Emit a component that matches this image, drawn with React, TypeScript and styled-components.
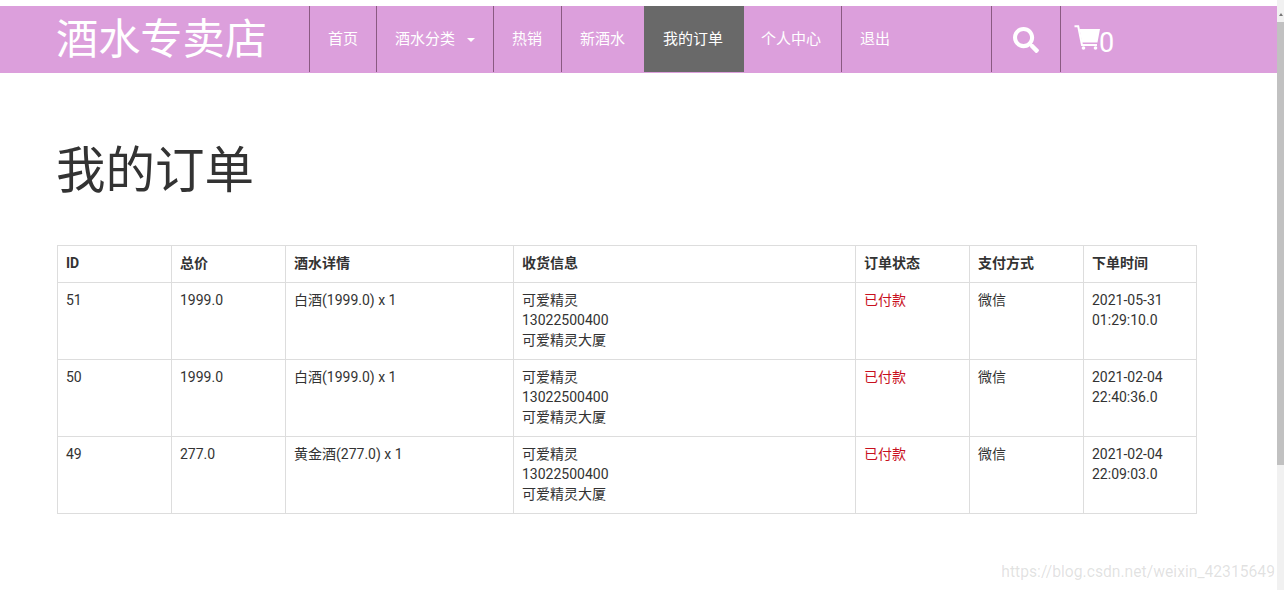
import React from "react";
import styled, { createGlobalStyle } from "styled-components";
import { FaSearch } from "react-icons/fa";

const GlobalStyle = createGlobalStyle`
  html, body {
    margin: 0;
    padding: 0;
    height: 100%;
    overflow: hidden;
    background: #fff;
    font-family: Roboto, "Noto Sans CJK SC", sans-serif;
    color: #333;
  }
`;

const Page = styled.div`
  display: flex;
  width: 1284px;
  height: 590px;
  position: relative;
  overflow: hidden;
`;

const Content = styled.div`
  width: 1277px;
  padding-top: 6px;
`;

const Navbar = styled.nav`
  display: flex;
  height: 67px;
  background: #dc9fdc;
  color: #fff;
`;

const Brand = styled.div`
  width: 253px;
  padding-left: 56px;
  font-size: 42.2px;
  line-height: 60px;
  font-family: "Noto Sans CJK SC", sans-serif;
  font-weight: 400;
`;

const NavItem = styled.a<{ $width: number; $active?: boolean; $plain?: boolean }>`
  box-sizing: border-box;
  width: ${(p) => p.$width}px;
  height: 66px;
  display: flex;
  align-items: center;
  gap: 12px;
  padding: 0 0 4px ${(p) => (p.$active ? 19 : p.$plain ? 17 : 18)}px;
  font-size: 15px;
  color: #fff;
  background: ${(p) => (p.$active ? "#696969" : "transparent")};
  border-left: ${(p) => (p.$plain ? "none" : "1px solid #8a5a82")};
`;

const Caret = styled.span`
  width: 0;
  height: 0;
  margin-top: 5px;
  border-left: 4px solid transparent;
  border-right: 4px solid transparent;
  border-top: 4px solid #fff;
`;

const IconItem = styled.div<{ $width: number }>`
  box-sizing: border-box;
  width: ${(p) => p.$width}px;
  height: 66px;
  display: flex;
  align-items: center;
  padding: 2px 0 0 21px;
  border-left: 1px solid #8a5a82;
`;

const CartItem = styled(IconItem)`
  padding: 0 0 0 13px;
  font-size: 27px;
  line-height: 1;
`;

const CartIcon = styled.svg`
  width: 26px;
  height: 25px;
  margin-bottom: 3px;
`;

const CartCount = styled.span`
  margin: 8px 0 0 -1px;
`;

const Main = styled.main`
  padding: 67px 80px 0 57px;
`;

const Heading = styled.h1`
  margin: 0 0 43px -1px;
  font-size: 49.5px;
  line-height: 62px;
  font-weight: 400;
`;

const Table = styled.table`
  width: 1139px;
  table-layout: fixed;
  border-collapse: collapse;
  font-size: 14px;
  line-height: 20px;
`;

const Head = styled.th`
  padding: 7px 8px 9px;
  height: 20px;
  border: 1px solid #ddd;
  text-align: left;
  font-weight: 700;
`;

const Cell = styled.td<{ $paid?: boolean }>`
  padding: 7px 8px 9px;
  height: 60px;
  border: 1px solid #ddd;
  vertical-align: top;
  color: ${(p) => (p.$paid ? "#c8101e" : "#333")};
`;

const Line = styled.div``;

const Scrollbar = styled.div`
  width: 7px;
  background: #f1f1f1;
  display: flex;
  flex-direction: column;
  align-items: center;
`;

const ArrowUp = styled.span`
  width: 0;
  height: 0;
  margin-top: 13px;
  border-left: 2px solid transparent;
  border-right: 2px solid transparent;
  border-bottom: 3px solid #777;
`;

const Thumb = styled.div`
  width: 100%;
  height: 443px;
  margin-top: 6px;
  background: #c1c1c1;
`;

const Watermark = styled.div`
  position: absolute;
  right: 9px;
  bottom: 9px;
  font-size: 15.7px;
  color: rgba(120, 120, 120, 0.22);
`;

const columns = [114, 114, 228, 342, 114, 114, 113];
const titles = ["ID", "总价", "酒水详情", "收货信息", "订单状态", "支付方式", "下单时间"];

const orders = [
  { id: 51, total: "1999.0", item: "白酒(1999.0) x 1", date: "2021-05-31", time: "01:29:10.0" },
  { id: 50, total: "1999.0", item: "白酒(1999.0) x 1", date: "2021-02-04", time: "22:40:36.0" },
  { id: 49, total: "277.0", item: "黄金酒(277.0) x 1", date: "2021-02-04", time: "22:09:03.0" },
];

export default function App() {
  return (
    <Page>
      <GlobalStyle />
      <Content>
        <Navbar>
          <Brand>酒水专卖店</Brand>
          <NavItem $width={67}>首页</NavItem>
          <NavItem $width={117}>
            酒水分类
            <Caret />
          </NavItem>
          <NavItem $width={68}>热销</NavItem>
          <NavItem $width={83}>新酒水</NavItem>
          <NavItem $width={100} $active $plain>我的订单</NavItem>
          <NavItem $width={97} $plain>个人中心</NavItem>
          <NavItem $width={150}>退出</NavItem>
          <IconItem $width={69}>
            <FaSearch size={26} />
          </IconItem>
          <CartItem $width={120}>
            <CartIcon viewBox="0 0 26 25">
              <path d="M0.5 1.2H4.2L8 20H23" fill="none" stroke="#fff" strokeWidth="2" />
              <path d="M5.5 4H26L23.5 17.5H8Z" fill="#fff" />
              <circle cx="9.5" cy="23" r="1.8" fill="#fff" />
              <circle cx="21.5" cy="23" r="1.8" fill="#fff" />
            </CartIcon>
            <CartCount>0</CartCount>
          </CartItem>
        </Navbar>
        <Main>
          <Heading>我的订单</Heading>
          <Table>
            <colgroup>
              {columns.map((w, i) => (
                <col key={i} width={w} />
              ))}
            </colgroup>
            <thead>
              <tr>
                {titles.map((t) => (
                  <Head key={t}>{t}</Head>
                ))}
              </tr>
            </thead>
            <tbody>
              {orders.map((o) => (
                <tr key={o.id}>
                  <Cell>{o.id}</Cell>
                  <Cell>{o.total}</Cell>
                  <Cell>{o.item}</Cell>
                  <Cell>
                    <Line>可爱精灵</Line>
                    <Line>13022500400</Line>
                    <Line>可爱精灵大厦</Line>
                  </Cell>
                  <Cell $paid>已付款</Cell>
                  <Cell>微信</Cell>
                  <Cell>
                    <Line>{o.date}</Line>
                    <Line>{o.time}</Line>
                  </Cell>
                </tr>
              ))}
            </tbody>
          </Table>
        </Main>
      </Content>
      <Scrollbar>
        <ArrowUp />
        <Thumb />
      </Scrollbar>
      <Watermark>https://blog.csdn.net/weixin_42315649</Watermark>
    </Page>
  );
}
